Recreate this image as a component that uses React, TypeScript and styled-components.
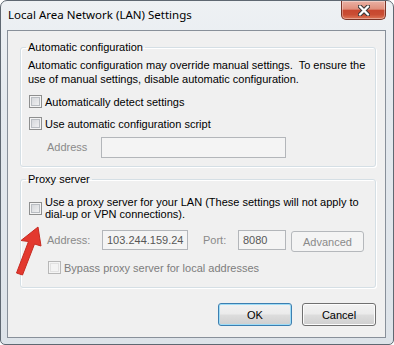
import React from 'react'
import styled, { createGlobalStyle } from 'styled-components'

const GlobalStyle = createGlobalStyle`
  html, body {
    margin: 0;
    padding: 0;
    background: #ffffff;
  }
  body {
    font-family: 'Liberation Sans', Arial, sans-serif;
    font-size: 11px;
  }
`

const Window = styled.div`
  position: relative;
  box-sizing: border-box;
  width: 394px;
  height: 345px;
  display: flex;
  flex-direction: column;
  border: 1px solid #5f6872;
  border-radius: 7px 7px 5px 5px;
  background: linear-gradient(180deg, #eef1f4 0%, #e4e9ee 30%, #dde3e9 100%);
  overflow: hidden;
`

const TitleBar = styled.div`
  display: flex;
  align-items: flex-start;
  height: 29px;
  flex: none;
`

const Title = styled.div`
  flex: 1;
  padding: 6px 0 0 7px;
  font-family: 'Noto Sans', 'Open Sans', sans-serif;
  font-size: 11.5px;
  line-height: 16px;
  color: #000;
`

const CloseButton = styled.div`
  width: 45px;
  height: 19px;
  margin-right: 7px;
  box-sizing: border-box;
  display: flex;
  align-items: center;
  justify-content: center;
  border: 1px solid #7a3426;
  border-top: none;
  border-radius: 0 0 5px 5px;
  background: linear-gradient(
    180deg,
    #eab1a4 0%,
    #e08f7c 45%,
    #c8472f 52%,
    #c94d33 75%,
    #de7657 100%
  );
  box-shadow: inset 0 0 0 1px rgba(255, 255, 255, 0.35);
`

const Client = styled.div`
  flex: 1;
  display: flex;
  flex-direction: column;
  margin: 0 7px 6px 6px;
  padding: 0 9px 0 12px;
  border: 1px solid #88909a;
  background: #f0f0f0;
  color: #000;
`

const Group = styled.fieldset<{ $gap: number }>`
  margin: ${p => p.$gap}px 0 0 0;
  padding: 0;
  min-width: 0;
  border: 1px solid #d5dfe5;
  border-radius: 3px;
  box-shadow: inset 1px 1px 0 #ffffff, 1px 1px 0 #ffffff;
`

const Legend = styled.legend`
  margin-left: 5px;
  padding: 0 2px;
  line-height: 14px;
`

const GroupBody = styled.div<{ $top: number; $bottom: number }>`
  display: flex;
  flex-direction: column;
  padding: ${p => p.$top}px 0 ${p => p.$bottom}px 7px;
`

const Description = styled.div`
  line-height: 14px;
  white-space: nowrap;
`

const CheckRow = styled.div<{ $gap: number; $indent: number; $disabled?: boolean }>`
  display: flex;
  align-items: center;
  gap: 3px;
  margin: ${p => p.$gap}px 0 0 ${p => p.$indent}px;
  line-height: 12px;
  white-space: nowrap;
  color: ${p => (p.$disabled ? '#7d7d7d' : '#000')};
`

const CheckBox = styled.span<{ $disabled?: boolean }>`
  flex: none;
  width: 13px;
  height: 13px;
  box-sizing: border-box;
  border: 1px solid ${p => (p.$disabled ? '#b7b7b7' : '#8e8f8f')};
  background: ${p =>
    p.$disabled
      ? '#f4f4f4'
      : 'linear-gradient(135deg, #cfd2d6 0%, #e6e7e9 60%, #f7f7f7 100%)'};
  box-shadow: inset 0 0 0 1px #f4f4f4,
    inset 0 0 0 2px ${p => (p.$disabled ? '#e2e2e2' : '#b9bdc2')};
`

const FieldRow = styled.div<{ $gap: number }>`
  display: flex;
  align-items: flex-start;
  margin-top: ${p => p.$gap}px;
  padding-left: 19px;
`

const FieldLabel = styled.span<{ $width: number; $offset?: number; $height: number }>`
  flex: none;
  width: ${p => p.$width}px;
  margin-left: ${p => p.$offset ?? 0}px;
  line-height: ${p => p.$height}px;
  color: #8a8a8a;
`

const TextBox = styled.div<{ $width: number; $height: number }>`
  flex: none;
  box-sizing: border-box;
  width: ${p => p.$width}px;
  height: ${p => p.$height}px;
  padding: 0 4px;
  border: 1px solid #b3b6ba;
  background: #f4f4f4;
  line-height: ${p => p.$height - 2}px;
  color: #575757;
  white-space: nowrap;
  overflow: hidden;
`

const Button = styled.div<{ $variant: 'default' | 'normal' | 'disabled'; $offset?: number }>`
  flex: none;
  box-sizing: border-box;
  width: ${p => (p.$variant === 'disabled' ? 73 : 74)}px;
  height: ${p => (p.$variant === 'disabled' ? 21 : 23)}px;
  margin: ${p => (p.$variant === 'disabled' ? '1px 0 0 ' + (p.$offset ?? 0) + 'px' : '0')};
  display: flex;
  align-items: center;
  justify-content: center;
  border-radius: 3px;
  border: 1px solid
    ${p => (p.$variant === 'default' ? '#3c7fb1' : p.$variant === 'disabled' ? '#b5b8bc' : '#707070')};
  background: ${p =>
    p.$variant === 'disabled'
      ? '#f4f4f4'
      : 'linear-gradient(180deg, #f2f2f2 0%, #ebebeb 48%, #dddddd 52%, #cfcfcf 100%)'};
  box-shadow: inset 0 0 0 1px
    ${p => (p.$variant === 'default' ? '#9fdcf6' : p.$variant === 'disabled' ? '#f4f4f4' : '#fcfcfc')};
  color: ${p => (p.$variant === 'disabled' ? '#8a8a8a' : '#000')};
`

const ButtonRow = styled.div`
  display: flex;
  justify-content: flex-end;
  gap: 10px;
  margin-top: 15px;
`

const Annotation = styled.svg`
  position: absolute;
  left: 0;
  top: 0;
  pointer-events: none;
`

function CloseGlyph() {
  return (
    <svg width="12" height="11" viewBox="0 0 12 11">
      <path d="M2 1.5 L10 9.5 M10 1.5 L2 9.5" stroke="#3a3a3a" strokeWidth="4.4" strokeLinecap="round" />
      <path d="M2 1.5 L10 9.5 M10 1.5 L2 9.5" stroke="#ffffff" strokeWidth="2.4" strokeLinecap="round" />
    </svg>
  )
}

export default function App() {
  return (
    <>
      <GlobalStyle />
      <Window>
        <TitleBar>
          <Title>Local Area Network (LAN) Settings</Title>
          <CloseButton>
            <CloseGlyph />
          </CloseButton>
        </TitleBar>
        <Client>
          <Group $gap={9}>
            <Legend>Automatic configuration</Legend>
            <GroupBody $top={4} $bottom={8}>
              <Description>
                Automatic configuration may override manual settings.&nbsp; To ensure the
                <br />
                use of manual settings, disable automatic configuration.
              </Description>
              <CheckRow $gap={9} $indent={1}>
                <CheckBox />
                <span>Automatically detect settings</span>
              </CheckRow>
              <CheckRow $gap={9} $indent={1}>
                <CheckBox />
                <span>Use automatic configuration script</span>
              </CheckRow>
              <FieldRow $gap={7}>
                <FieldLabel $width={54} $height={21}>Address</FieldLabel>
                <TextBox $width={185} $height={21} />
              </FieldRow>
            </GroupBody>
          </Group>

          <Group $gap={5}>
            <Legend>Proxy server</Legend>
            <GroupBody $top={10} $bottom={13}>
              <CheckRow $gap={0} $indent={1}>
                <CheckBox />
                <span>
                  Use a proxy server for your LAN (These settings will not apply to
                  <br />
                  dial-up or VPN connections).
                </span>
              </CheckRow>
              <FieldRow $gap={10}>
                <FieldLabel $width={55} $height={20}>Address:</FieldLabel>
                <TextBox $width={86} $height={20}>103.244.159.24</TextBox>
                <FieldLabel $width={35} $offset={15} $height={20}>Port:</FieldLabel>
                <TextBox $width={48} $height={20}>8080</TextBox>
                <Button $variant="disabled" $offset={5}>Advanced</Button>
              </FieldRow>
              <CheckRow $gap={9} $indent={20} $disabled>
                <CheckBox $disabled />
                <span>Bypass proxy server for local addresses</span>
              </CheckRow>
            </GroupBody>
          </Group>

          <ButtonRow>
            <Button $variant="default">OK</Button>
            <Button $variant="normal">Cancel</Button>
          </ButtonRow>
        </Client>

        <Annotation width="394" height="345" viewBox="0 0 394 345">
          <polygon
            points="37,226 40,245 33.5,243 21.5,274 15.5,272 27.5,240.5 20,239.5"
            fill="#e3392f"
            stroke="#c72b22"
            strokeWidth="1"
            strokeLinejoin="round"
          />
        </Annotation>
      </Window>
    </>
  )
}
